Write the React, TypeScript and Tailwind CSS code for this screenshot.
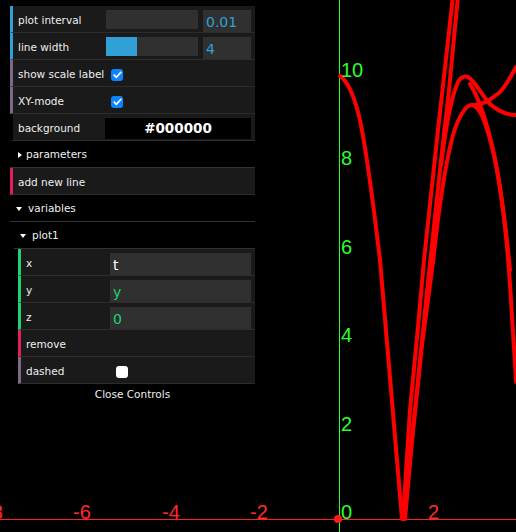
import type { ReactNode } from 'react'

const font = { fontFamily: '"DejaVu Sans", "Lucida Grande", sans-serif' }

function Arrow({ open }: { open?: boolean }) {
  return open ? (
    <svg width="6" height="4" viewBox="0 0 6 4" className="shrink-0">
      <path d="M0 0H6L3 4Z" fill="#fff" />
    </svg>
  ) : (
    <svg width="4" height="6" viewBox="0 0 4 6" className="shrink-0">
      <path d="M0 0L4 3L0 6Z" fill="#fff" />
    </svg>
  )
}

function Check({ on }: { on?: boolean }) {
  if (!on) return <div className="mt-[9px] h-[12px] w-[12px] rounded-[3px] bg-white" />
  return (
    <div className="mt-[9px] flex h-[12px] w-[12px] items-center justify-center rounded-[3px] bg-[#0b84fe]">
      <svg width="9" height="8" viewBox="0 0 9 8">
        <path d="M1.2 4.2L3.4 6.3L7.8 1.4" stroke="#fff" strokeWidth="1.7" fill="none" strokeLinecap="round" strokeLinejoin="round" />
      </svg>
    </div>
  )
}

function Row({ border, nested, name, children }: { border: string; nested?: boolean; name: string; children?: ReactNode }) {
  return (
    <div className={`flex h-[27px] border-b border-[#2c2c2c] bg-[#1a1a1a] pl-[5px] pr-[4px] border-l-[3px] ${border}`}>
      <div className={`${nested ? 'w-[84px]' : 'w-[88px]'} shrink-0 truncate text-[10.5px] leading-[28px] text-[#eee]`}>{name}</div>
      <div className="flex flex-1 items-start">{children}</div>
    </div>
  )
}

function Title({ label, open, indent }: { label: string; open?: boolean; indent?: boolean }) {
  return (
    <div className={`flex h-[27px] items-center border-b border-[#333] bg-black pt-[2px] ${indent ? 'gap-[6px] pl-[6px]' : open ? 'gap-[6px] pl-[6px]' : 'gap-[4px] pl-[8px]'}`}>
      <Arrow open={open} />
      <span className="text-[10.5px] text-[#eee]">{label}</span>
    </div>
  )
}

function NumberRow({ name, value, fill }: { name: string; value: string; fill: number }) {
  return (
    <Row border="border-l-[#2fa1d6]" name={name}>
      <div className="mt-[4px] h-[19px] w-[92px] bg-[#303030]">
        <div className="h-full bg-[#2fa1d6]" style={{ width: `${fill}px` }} />
      </div>
      <div className="ml-[5px] mt-[4px] h-[22px] w-[48px] bg-[#303030] pl-[3px] text-[14px] leading-[24px] text-[#2fa1d6]">{value}</div>
    </Row>
  )
}

function TextRow({ name, value, color }: { name: string; value: string; color: string }) {
  return (
    <Row border="border-l-[#1ed36f]" nested name={name}>
      <div className={`mt-[4px] h-[22px] w-[141px] bg-[#303030] pl-[3px] text-[14px] leading-[24px] ${color}`}>{value}</div>
    </Row>
  )
}

function Panel() {
  return (
    <div className="absolute left-[10px] top-[6px] w-[245px]" style={font}>
      <NumberRow name="plot interval" value="0.01" fill={0} />
      <NumberRow name="line width" value="4" fill={31} />
      <Row border="border-l-[#806787]" name="show scale label">
        <div className="ml-[5px]"><Check on /></div>
      </Row>
      <Row border="border-l-[#806787]" name="XY-mode">
        <div className="ml-[5px]"><Check on /></div>
      </Row>
      <Row border="border-l-black" name="background">
        <div className="-ml-[1px] mt-[4px] flex h-[21px] w-[146px] items-center justify-center bg-black text-[13.5px] font-bold text-white">
          #000000
        </div>
      </Row>
      <Title label="parameters" />
      <div className="flex h-[27px] border-b border-[#2c2c2c] border-l-[3px] border-l-[#e61d5f] bg-[#1a1a1a] pl-[5px] text-[10.5px] leading-[28px] text-[#eee]">
        add new line
      </div>
      <Title label="variables" open />
      <div className="pl-[4px]">
        <Title label="plot1" open indent />
        <div className="pl-[4px]">
          <TextRow name="x" value="t" color="text-white" />
          <TextRow name="y" value="y" color="text-[#1ed36f]" />
          <TextRow name="z" value="0" color="text-[#1ed36f]" />
          <div className="flex h-[27px] border-b border-[#2c2c2c] border-l-[3px] border-l-[#e61d5f] bg-[#1a1a1a] pl-[5px] text-[10.5px] leading-[28px] text-[#eee]">
            remove
          </div>
          <Row border="border-l-[#806787]" nested name="dashed">
            <div className="ml-[6px]"><Check /></div>
          </Row>
        </div>
      </div>
      <div className="h-[20px] bg-black text-center text-[10.5px] leading-[20px] text-[#eee]">Close Controls</div>
    </div>
  )
}

const yLabels = [
  { t: '10', y: 77 },
  { t: '8', y: 165 },
  { t: '6', y: 254 },
  { t: '4', y: 342 },
  { t: '2', y: 431 },
  { t: '0', y: 519 },
]
const xLabels = [
  { t: '-8', x: -15 },
  { t: '-6', x: 73 },
  { t: '-4', x: 162 },
  { t: '-2', x: 250 },
  { t: '2', x: 428 },
]

function Plot() {
  const curve = { fill: 'none', stroke: '#ff0000', strokeWidth: 4, strokeLinejoin: 'round' as const, strokeLinecap: 'round' as const }
  return (
    <svg className="absolute inset-0" width="516" height="532" viewBox="0 0 516 532">
      <line x1="339.5" y1="0" x2="339.5" y2="532" stroke="#2bff2b" strokeWidth="1" />
      <line x1="0" y1="519.5" x2="516" y2="519.5" stroke="#ff2020" strokeWidth="1" />
      <path {...curve} d="M340 76 C346 80 352 90 358 112 C366 142 374 210 380 260 C386 330 394 420 402 519" />
      <path {...curve} d="M403 519 L410 410 L418 327 L424 260 L438 130 L453 -4" />
      <path {...curve} d="M405 519 L412 440 L422 345 L433 262 C438 215 445 165 453 135 C458 118 466 104 472 105 C480 106 486 122 494 155 C502 192 508 250 511 300 C513 335 515 360 516 382" />
      <path {...curve} d="M404 519 L416 400 L428 282 L440 170 L449 90 L458 -4" />
      <path {...curve} d="M441 165 C446 125 452 95 458 82 C461 77 465 76 468 77 C476 82 482 96 490 104 C498 111 506 115 516 115" />
      <path {...curve} d="M472 105 C482 106 490 100 500 92 C506 86 511 76 516 67" />
      <path {...curve} d="M470 84 C480 100 490 130 498 175 C503 205 507 240 510 270" />
      <circle cx="338" cy="519" r="4" fill="#ff1a1a" />
      {yLabels.map((l) => (
        <text key={l.t} x="341" y={l.y} fill="#2bff2b" fontSize="20" fontFamily='"Liberation Sans", Arial, sans-serif'>
          {l.t}
        </text>
      ))}
      {xLabels.map((l) => (
        <text key={l.t} x={l.x} y="519" fill="#ff2a2a" fontSize="20" fontFamily='"Liberation Sans", Arial, sans-serif'>
          {l.t}
        </text>
      ))}
    </svg>
  )
}

export default function App() {
  return (
    <div className="relative h-[532px] w-[516px] overflow-hidden bg-black">
      <Plot />
      <Panel />
    </div>
  )
}
